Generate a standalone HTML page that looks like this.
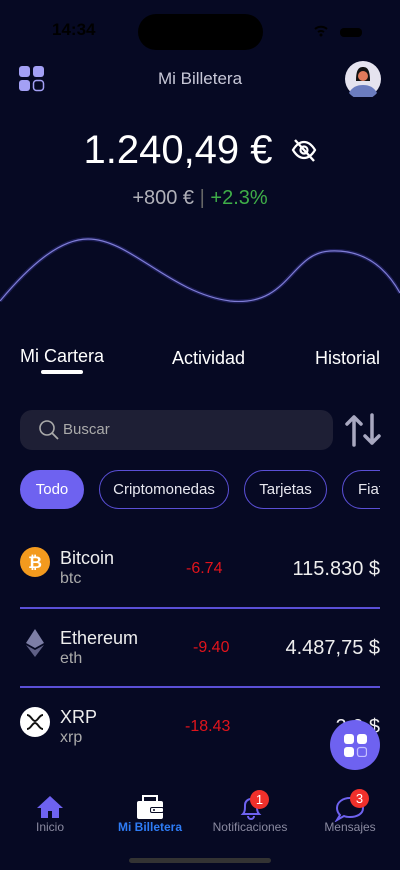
<!DOCTYPE html>
<html><head><meta charset="utf-8"><style>
*{margin:0;padding:0;box-sizing:border-box}
body{width:400px;height:870px;background:#060923;font-family:"Liberation Sans",sans-serif;color:#fff;position:relative;overflow:hidden}
.a{position:absolute}
.pill{position:absolute;top:470px;height:39px;border:1.5px solid #5a4fd6;border-radius:20px;font-size:15px;line-height:37px;text-align:center;color:#e8e8f0}
.hr{position:absolute;left:20px;width:360px;height:1.5px;background:#5a4fd6}
.nm{font-size:18px;color:#eee}
.sy{font-size:16px;color:#aaa}
.ch{font-size:16px;color:#e0141c}
.pr{font-size:20px;color:#eee;right:20px}
.nav{font-size:12px;color:#8a8aa0;text-align:center;width:100px;top:820px}
.badge{position:absolute;width:19px;height:19px;border-radius:50%;background:#f0302b;color:#fff;font-size:13px;text-align:center;line-height:19px}
</style></head><body>
<div class="a" style="left:52px;top:20px;font-size:17px;color:#000;font-weight:bold">14:34</div>
<div class="a" style="left:138px;top:14px;width:125px;height:36px;border-radius:18px;background:#000"></div>
<svg class="a" style="left:310px;top:24px" width="60" height="16"><path d="M5 5a9 9 0 0 1 12 0M8 8a5 5 0 0 1 6 0" stroke="#000" stroke-width="2" fill="none"/><circle cx="11" cy="11" r="1.5" fill="#000"/><rect x="30" y="4" width="22" height="9" rx="4" fill="#000"/></svg>
<svg class="a" style="left:19px;top:66px" width="27" height="27"><rect x="0" y="0" width="11" height="11" rx="3" fill="#a3a0f5"/><rect x="14" y="0" width="11" height="11" rx="3" fill="#a3a0f5"/><rect x="0" y="14" width="11" height="11" rx="3" fill="#a3a0f5"/><rect x="14.5" y="14.5" width="10" height="10" rx="3" fill="none" stroke="#a3a0f5" stroke-width="1.5"/></svg>
<div class="a" style="left:0;width:400px;top:69px;text-align:center;font-size:17px;color:#c8c8d8">Mi Billetera</div>
<svg class="a" style="left:345px;top:61px" width="36" height="36"><circle cx="18" cy="18" r="18" fill="#e5e3ef"/><path d="M11 20c0-10 2-14 7-14s7 4 7 14z" fill="#111"/><circle cx="18" cy="15" r="5" fill="#e07a5a"/><path d="M4 32c3-6 8-8 14-8s11 2 14 8a18 18 0 0 1-28 0z" fill="#6b7cbf"/></svg>
<div class="a" style="left:0;width:356px;top:128px;text-align:center;font-size:40px;font-weight:300">1.240,49 €</div>
<svg class="a" style="left:290px;top:137px" width="28" height="26" viewBox="0 0 28 26"><path d="M3 13c3-5 7-8 11-8s8 3 11 8c-3 5-7 8-11 8s-8-3-11-8z" fill="none" stroke="#fff" stroke-width="2.2"/><circle cx="14" cy="13" r="3.5" fill="none" stroke="#fff" stroke-width="2.2"/><path d="M5 3l19 21" stroke="#fff" stroke-width="2.4"/></svg>
<div class="a" style="left:0;width:400px;top:187px;text-align:center;font-size:20px;color:#b0b0b8">+800 € <span style="color:#666">|</span> <span style="color:#3fae48">+2.3%</span></div>
<svg class="a" style="left:0;top:225px" width="400" height="90"><path d="M0 76C30 40 60 14 88 14C130 14 170 68 230 76C290 82 290 28 330 26C370 24 390 50 400 68" fill="none" stroke="#3c3a9a" stroke-width="4" opacity=".4"/><path d="M0 76C30 40 60 14 88 14C130 14 170 68 230 76C290 82 290 28 330 26C370 24 390 50 400 68" fill="none" stroke="#7f7dd6" stroke-width="1.2"/></svg>
<div class="a" style="left:20px;top:346px;font-size:18px">Mi Cartera</div>
<div class="a" style="left:41px;top:370px;width:42px;height:4px;background:#fff;border-radius:2px"></div>
<div class="a" style="left:172px;top:348px;font-size:18px">Actividad</div>
<div class="a" style="left:315px;top:348px;font-size:18px">Historial</div>
<div class="a" style="left:20px;top:410px;width:313px;height:40px;border-radius:12px;background:#1e1f35"></div>
<svg class="a" style="left:38px;top:419px" width="22" height="22"><circle cx="9" cy="9" r="7" fill="none" stroke="#aaa" stroke-width="1.6"/><path d="M14 14l6 6" stroke="#aaa" stroke-width="1.8"/></svg>
<div class="a" style="left:63px;top:421px;font-size:15px;color:#aaa">Buscar</div>
<svg class="a" style="left:345px;top:413px" width="36" height="34"><path d="M9 32V4M2 11l7-7 7 7M27 2v28M20 23l7 7 7-7" fill="none" stroke="#a8a8c0" stroke-width="3.5" stroke-linecap="round" stroke-linejoin="round"/></svg>
<div class="pill" style="left:20px;width:64px;background:#6e62f0;border-color:#6e62f0;color:#fff">Todo</div>
<div class="pill" style="left:99px;width:130px">Criptomonedas</div>
<div class="pill" style="left:244px;width:83px">Tarjetas</div>
<div class="a" style="left:342px;top:470px;width:38px;height:39px;overflow:hidden"><div class="pill" style="left:0;top:0;width:70px;text-align:left;padding-left:15px">Fiat</div></div>
<svg class="a" style="left:20px;top:547px" width="30" height="30"><circle cx="15" cy="15" r="15" fill="#f39a1e"/><text x="15" y="21" text-anchor="middle" font-size="17" font-weight="bold" fill="#fff" font-family="Liberation Sans">₿</text></svg>
<div class="a nm" style="left:60px;top:548px">Bitcoin</div><div class="a sy" style="left:60px;top:570px">btc</div>
<div class="a ch" style="left:186px;top:560px">-6.74</div>
<div class="a pr" style="top:558px">115.830 $</div>
<div class="hr" style="top:607px"></div>
<svg class="a" style="left:26px;top:629px" width="18" height="28"><path d="M9 0L0 14l9 5 9-5z" fill="#7d7ea6"/><path d="M0 16l9 12 9-12-9 5z" fill="#5e5f85"/></svg>
<div class="a nm" style="left:60px;top:628px">Ethereum</div><div class="a sy" style="left:60px;top:650px">eth</div>
<div class="a ch" style="left:193px;top:639px">-9.40</div>
<div class="a pr" style="top:637px">4.487,75 $</div>
<div class="hr" style="top:686px"></div>
<svg class="a" style="left:20px;top:707px" width="30" height="30"><circle cx="15" cy="15" r="15" fill="#fff"/><path d="M7 8c4 0 5 6 8 6s4-6 8-6M7 22c4 0 5-6 8-6s4 6 8 6" fill="none" stroke="#111" stroke-width="2"/></svg>
<div class="a nm" style="left:60px;top:707px">XRP</div><div class="a sy" style="left:60px;top:729px">xrp</div>
<div class="a ch" style="left:185px;top:718px">-18.43</div>
<div class="a pr" style="top:716px">2.0 $</div>
<div class="a" style="left:330px;top:720px;width:50px;height:50px;border-radius:50%;background:#6e62f0"></div>
<svg class="a" style="left:344px;top:734px" width="23" height="23"><rect x="0" y="0" width="10" height="10" rx="3" fill="#fff"/><rect x="13" y="0" width="10" height="10" rx="3" fill="#fff"/><rect x="0" y="13" width="10" height="10" rx="3" fill="#fff"/><rect x="13.5" y="13.5" width="9" height="9" rx="2.5" fill="none" stroke="#c5c0ff" stroke-width="1.3"/></svg>
<svg class="a" style="left:37px;top:795px" width="26" height="24"><path d="M13 1L0 13h4v10h7v-7h4v7h7V13h4z" fill="#6e62f0"/></svg>
<svg class="a" style="left:136px;top:794px" width="28" height="26"><path d="M7 7V2h14v5" fill="none" stroke="#fff" stroke-width="2"/><rect x="1" y="7" width="26" height="18" rx="2" fill="#fff"/><rect x="14" y="13" width="14" height="6" rx="2" fill="#060923"/><rect x="15" y="14" width="12" height="4" rx="1" fill="#fff"/><circle cx="18" cy="16" r="1" fill="#060923"/></svg>
<svg class="a" style="left:238px;top:795px" width="26" height="26"><path d="M5 19c2-2 2-5 2-9a6 6 0 0 1 12 0c0 4 0 7 2 9z" fill="none" stroke="#6e62f0" stroke-width="2"/><path d="M10 21a3 3 0 0 0 6 0" fill="none" stroke="#6e62f0" stroke-width="2"/></svg>
<div class="badge" style="left:250px;top:790px">1</div>
<svg class="a" style="left:334px;top:792px" width="32" height="30"><path d="M3 16c0-6 6-10 13-10s13 4 13 10-6 9-13 9c-2 0-4 0-6-1l-7 4 3-5c-2-2-3-4-3-7z" fill="none" stroke="#6e62f0" stroke-width="2"/></svg>
<div class="badge" style="left:350px;top:789px">3</div>
<div class="a nav" style="left:0">Inicio</div>
<div class="a nav" style="left:100px;color:#2e7cf6;font-weight:bold">Mi Billetera</div>
<div class="a nav" style="left:200px">Notificaciones</div>
<div class="a nav" style="left:300px">Mensajes</div>
<div class="a" style="left:129px;top:858px;width:142px;height:5px;border-radius:3px;background:#333"></div>
</body></html>
